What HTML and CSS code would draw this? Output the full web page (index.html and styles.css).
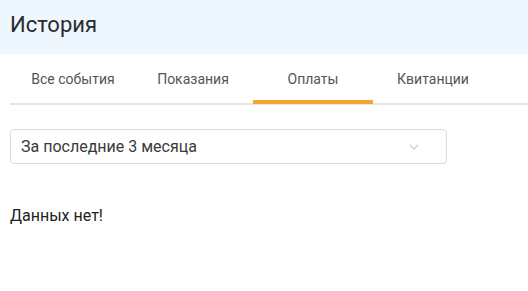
FILE: index.html
```html
<!DOCTYPE html>
<html lang="ru">
  <head>
    <meta charset="UTF-8" />
    <meta name="viewport" content="width=device-width, initial-scale=1.0" />
    <title>История</title>
    <link rel="stylesheet" href="styles.css">
  </head>
  <body>
    <div class="page-header">
      <h1 class="page-title">История</h1>
    </div>
    <div class="content">
      <div class="tabs">
        <div class="tab">Все события</div>
        <div class="tab">Показания</div>
        <div class="tab active">Оплаты</div>
        <div class="tab">Квитанции</div>
      </div>
      <div class="period-select">
        <span class="period-value">За последние 3 месяца</span>
        <svg class="chevron" width="10" height="6" viewBox="0 0 10 6">
          <path d="M1 1 L5 5 L9 1" fill="none" stroke="#c9d0dd" stroke-width="1.5" />
        </svg>
      </div>
      <p class="empty">Данных нет!</p>
    </div>
  </body>
</html>
```

FILE: styles.css
```css
body {
  margin: 0;
  font-family: Roboto, "Liberation Sans", sans-serif;
  background-color: #fff;
  color: #333;
}
.page-header {
  background-color: #eef6fe;
  height: 54px;
  padding: 0 10px;
  display: flex;
  align-items: center;
}
.page-title {
  margin: 0;
  font-size: 22px;
  font-weight: 400;
  color: #2b2b2b;
  line-height: 1;
  padding-bottom: 4px;
}
.content {
  padding-left: 10px;
}
.tabs {
  display: flex;
  padding-left: 3px;
  border-bottom: 2px solid #e6e6e6;
}
.tab {
  position: relative;
  width: 120px;
  height: 49px;
  box-sizing: border-box;
  padding-top: 17px;
  text-align: center;
  font-size: 14px;
  color: #555;
}
.tab.active::after {
  content: "";
  position: absolute;
  left: 0;
  right: 0;
  bottom: -1px;
  height: 4px;
  background-color: #f2a531;
}
.period-select {
  margin-top: 24px;
  width: 437px;
  height: 35px;
  box-sizing: border-box;
  border: 1px solid #d8dce6;
  border-radius: 4px;
  display: flex;
  align-items: center;
  justify-content: space-between;
  padding: 0 27px 0 10px;
}
.period-value {
  font-size: 16px;
  color: #3a3a3a;
}
.chevron {
  display: block;
}
.empty {
  margin: 42px 0 0;
  font-size: 16px;
  color: #222;
}
```
